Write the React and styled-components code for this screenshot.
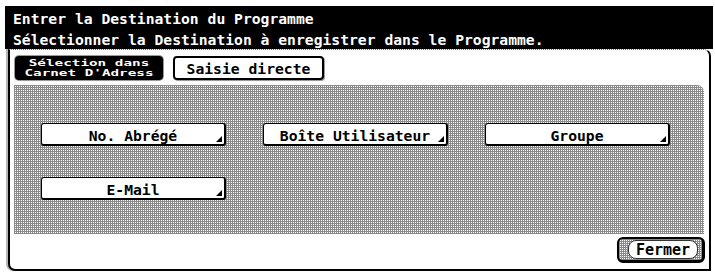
import React from "react";
import styled, { createGlobalStyle } from "styled-components";

const Global = createGlobalStyle`
  html, body { margin: 0; padding: 0; background: #fff; }
  * { box-sizing: border-box; }
`;

const mono = `"DejaVu Sans Mono", "Liberation Mono", monospace`;

const dither = `
  background-color: #fff;
  background-image:
    linear-gradient(to right, #8a8a8a 1px, transparent 1px),
    linear-gradient(to bottom, #8a8a8a 1px, transparent 1px);
  background-size: 2px 2px;
`;

const Screen = styled.div`
  width: 715px;
  height: 274px;
  padding: 6px 2px 0 5px;
  font-family: ${mono};
  overflow: hidden;
`;

const Header = styled.header`
  height: 43px;
  background: #000;
  color: #fff;
  padding: 2px 0 0 8px;
  font-size: 14.7px;
  font-weight: bold;
  line-height: 21px;
  white-space: pre;
`;

const Panel = styled.section`
  margin: 0 2px 0 3px;
  height: 222px;
  border: 2px solid #000;
  border-top: 1px dotted #777;
  border-radius: 0 7px 0 7px;
  box-shadow: -2px 0 0 0 #b5b5b5;
  padding: 6px 4px 0 4px;
  display: flex;
  flex-direction: column;
  background: #fff;
`;

const Tabs = styled.nav`
  display: flex;
  gap: 10px;
  margin-left: 1px;
  height: 24px;
`;

const Tab = styled.div`
  height: 24px;
  display: flex;
  flex-direction: column;
  align-items: center;
  justify-content: center;
  font-size: 14.7px;
  font-weight: bold;
  white-space: pre;
  border-radius: 4px;
  ${(p) =>
    p.$active
      ? `
    width: 148px;
    background: #000;
    color: #fff;
    box-shadow: 0 0 0 1px #9a9a9a;
  `
      : `
    width: 151px;
    background: #fff;
    color: #000;
    border: 2px solid #000;
    box-shadow: 1px 1px 0 #9a9a9a;
  `}
`;

const SquashedLine = styled.span`
  display: block;
  font-size: 14.3px;
  line-height: 10px;
  height: 10px;
  transform: scaleY(0.58);
  transform-origin: center;
`;

const Area = styled.div`
  margin: 5px 1px 0 0;
  height: 149px;
  ${dither}
  border-radius: 0 7px 0 0;
  padding: 38px 0 0 27px;
  display: grid;
  grid-template-columns: repeat(3, 185px);
  grid-auto-rows: 23px;
  column-gap: 37px;
  row-gap: 31px;
  align-content: start;
`;

const Key = styled.button`
  position: relative;
  height: 23px;
  padding: 2px 0 0;
  margin: 0;
  background: #fff;
  border: 1px solid #000;
  border-right-width: 2px;
  border-bottom-width: 2px;
  border-radius: 3px;
  font-family: ${mono};
  font-size: 14.7px;
  font-weight: bold;
  color: #000;
  white-space: pre;
  text-align: center;
  cursor: pointer;
`;

const Corner = styled.span`
  position: absolute;
  right: 2px;
  bottom: 2px;
  width: 0;
  height: 0;
  border-left: 6px solid transparent;
  border-bottom: 6px solid #000;
`;

const Footer = styled.footer`
  display: flex;
  justify-content: flex-end;
  margin-top: 3px;
`;

const Close = styled.button`
  width: 88px;
  height: 26px;
  margin: 0;
  padding: 1px 4px 1px 9px;
  border: 2px solid #000;
  border-right-width: 3px;
  border-bottom-width: 3px;
  border-radius: 6px;
  ${dither}
  display: flex;
  align-items: stretch;
  cursor: pointer;
`;

const CloseFace = styled.span`
  flex: 1;
  display: flex;
  align-items: center;
  justify-content: center;
  background: #fff;
  border: 1px solid #333;
  border-radius: 8px;
  font-family: ${mono};
  font-size: 15px;
  font-weight: bold;
  color: #000;
  padding-top: 1px;
`;

const keys = ["No. Abrégé", "Boîte Utilisateur", "Groupe", "E-Mail"];

export default function App() {
  return (
    <>
      <Global />
      <Screen>
        <Header>
          <div>Entrer la Destination du Programme</div>
          <div>Sélectionner la Destination à enregistrer dans le Programme.</div>
        </Header>
        <Panel>
          <Tabs>
            <Tab $active>
              <SquashedLine>Sélection dans</SquashedLine>
              <SquashedLine>Carnet D'Adress</SquashedLine>
            </Tab>
            <Tab>Saisie directe</Tab>
          </Tabs>
          <Area>
            {keys.map((k) => (
              <Key key={k}>
                {k}
                <Corner />
              </Key>
            ))}
          </Area>
          <Footer>
            <Close>
              <CloseFace>Fermer</CloseFace>
            </Close>
          </Footer>
        </Panel>
      </Screen>
    </>
  );
}
